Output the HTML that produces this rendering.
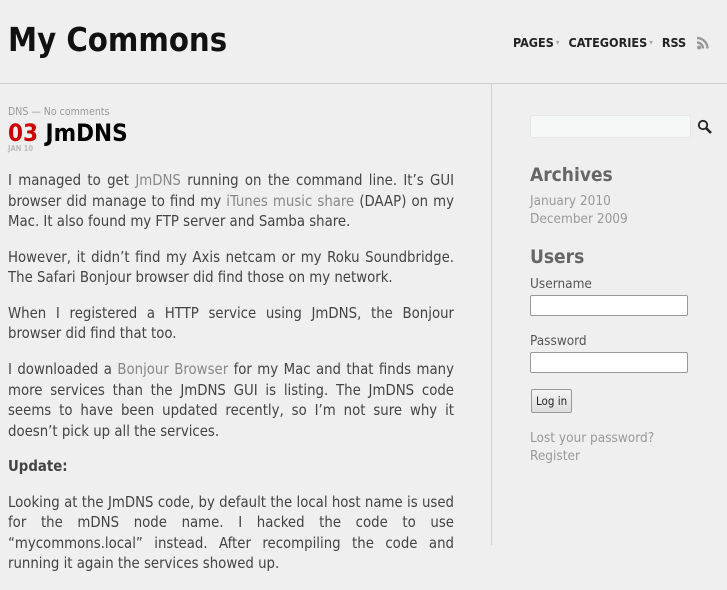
<!DOCTYPE html>
<html><head><meta charset="utf-8"><style>
*{margin:0;padding:0;box-sizing:border-box}
body{width:727px;height:545px;overflow:hidden;background:#efefef;font-family:"DejaVu Sans Condensed","DejaVu Sans","Liberation Sans",sans-serif;font-stretch:condensed;color:#444}
#hdr{position:absolute;left:0;top:0;width:727px;height:84px;border-bottom:1px solid #d0d0d0}
#hdr h1{position:absolute;left:8px;top:21px;font-size:32.5px;font-weight:bold;color:#111}
#nav{position:absolute;left:513px;top:35px;font-size:12.5px;font-weight:bold;color:#222;white-space:nowrap}
#nav span{margin-right:9px}
#nav i{font-style:normal;color:#aaa;font-size:8px;vertical-align:2px;margin-left:2px}
#vline{position:absolute;left:491px;top:84px;width:1px;height:461px;background:#d0d0d0}
#main{position:absolute;left:8px;top:106px;width:446px}
.meta{font-size:10.5px;color:#999}
h2{font-size:24px;font-weight:bold;color:#000;margin-top:2px;line-height:27px}
h2 b{color:#c00}
.date{font-size:7.5px;color:#bbb;font-weight:bold;margin-top:-3px}
p{font-size:14.8px;line-height:20.5px;text-align:justify;margin-bottom:15.2px}
#main .first{margin-top:18px}
a{color:#888;text-decoration:none}
#side{position:absolute;left:530px;top:115px;width:190px}
.search{width:161px;height:23px;background:#f6f7f7;border:1px solid #e6e6e6;border-radius:2px}
h3{font-size:19px;font-weight:bold;color:#666;margin-top:26px}
.lnk{font-size:13.5px;color:#999;line-height:18px}
label{display:block;font-size:13.5px;color:#555}
.inp{width:158px;height:21px;background:#fff;border:1px solid #999;border-radius:2px;margin-top:3px}
.btn{display:inline-block;margin-top:16px;font-size:11.5px;color:#222;border:1px solid #999;border-radius:2px;background:linear-gradient(#f4f4f4,#ddd);padding:4px 4px;margin-left:1px}
</style></head><body>
<div id="hdr"><h1>My Commons</h1>
<div id="nav"><span>PAGES<i>▾</i></span><span>CATEGORIES<i>▾</i></span><span>RSS</span>
<svg width="16" height="14" viewBox="0 0 16 14" style="vertical-align:-3px;margin-left:-3px"><circle cx="3" cy="11.5" r="2" fill="#999"/><path d="M1 6.5a6 6 0 0 1 6 6M1 2a10.5 10.5 0 0 1 10.5 10.5" stroke="#999" stroke-width="2.4" fill="none"/></svg></div></div>
<div id="vline"></div>
<div id="main">
<div class="meta">DNS — No comments</div>
<h2><b>03</b> JmDNS</h2>
<div class="date">JAN 10</div>
<p class="first">I managed to get <a>JmDNS</a> running on the command line. It’s GUI browser did manage to find my <a>iTunes music share</a> (DAAP) on my Mac. It also found my FTP server and Samba share.</p>
<p>However, it didn’t find my Axis netcam or my Roku Soundbridge. The Safari Bonjour browser did find those on my network.</p>
<p>When I registered a HTTP service using JmDNS, the Bonjour browser did find that too.</p>
<p>I downloaded a <a>Bonjour Browser</a> for my Mac and that finds many more services than the JmDNS GUI is listing. The JmDNS code seems to have been updated recently, so I’m not sure why it doesn’t pick up all the services.</p>
<p><b>Update:</b></p>
<p>Looking at the JmDNS code, by default the local host name is used for the mDNS node name. I hacked the code to use “mycommons.local” instead. After recompiling the code and running it again the services showed up.</p>
</div>
<div id="side">
<div style="position:relative"><div class="search"></div>
<svg width="16" height="16" viewBox="0 0 16 16" style="position:absolute;left:167px;top:4px"><circle cx="6" cy="6" r="4.2" stroke="#222" stroke-width="1.8" fill="none"/><path d="M9 9l5 5" stroke="#222" stroke-width="2.6"/></svg></div>
<h3>Archives</h3>
<div class="lnk" style="margin-top:6px">January 2010<br>December 2009</div>
<h3 style="margin-top:18px">Users</h3>
<label style="margin-top:8px">Username</label><div class="inp"></div>
<label style="margin-top:17px">Password</label><div class="inp"></div>
<div class="btn">Log in</div>
<div class="lnk" style="margin-top:16px">Lost your password?<br>Register</div>
</div>
</body></html>
